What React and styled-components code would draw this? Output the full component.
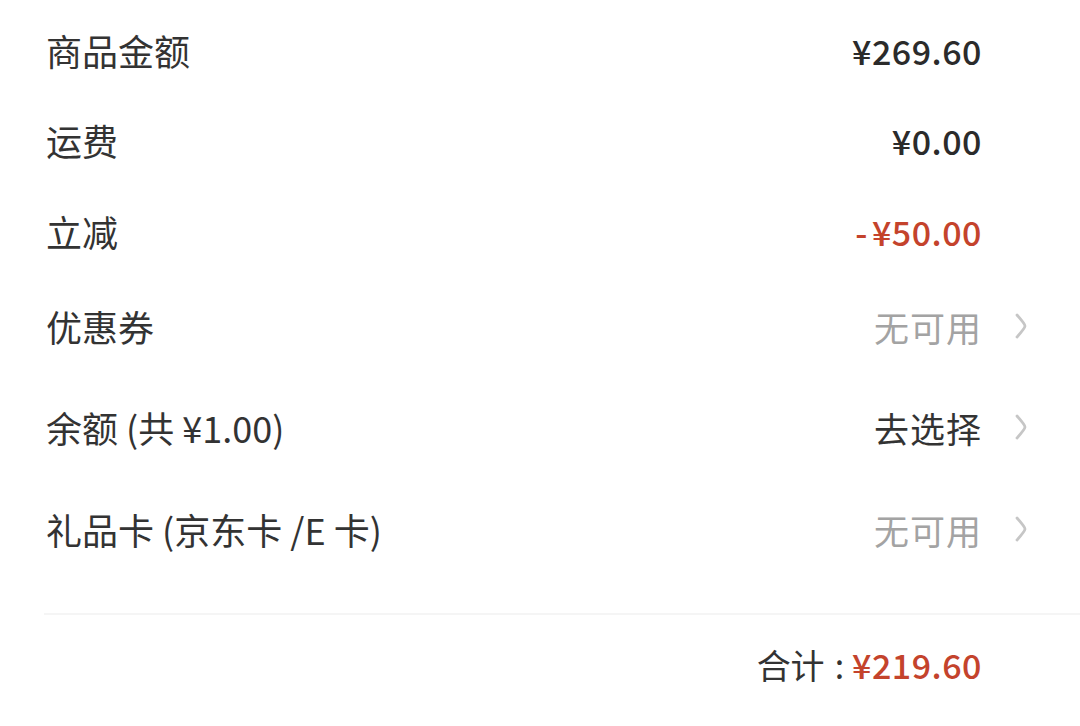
import React from "react";
import styled, { createGlobalStyle } from "styled-components";

const GlobalStyle = createGlobalStyle`
  html, body {
    margin: 0;
    padding: 0;
    background: #fff;
  }
  body {
    font-family: "Noto Sans CJK SC", "Noto Sans", sans-serif;
  }
`;

const Page = styled.div`
  width: 1080px;
  height: 726px;
  background: #fff;
  overflow: hidden;
  padding-top: 5px;
  box-sizing: border-box;
`;

const List = styled.div`
  display: flex;
  flex-direction: column;
  padding-left: 46px;
`;

const Row = styled.div`
  display: flex;
  align-items: center;
  justify-content: space-between;
  height: ${(p) => p.h}px;
  padding-right: ${(p) => (p.arrow ? 52 : 98)}px;
`;

const Label = styled.span`
  font-size: 36px;
  color: #333;
`;

const Amount = styled.span`
  font-size: 34px;
  font-weight: 500;
  color: ${(p) => (p.red ? "#c4432c" : "#2b2b2b")};
  letter-spacing: 0.5px;
`;

const Minus = styled.span`
  margin-right: 4px;
`;

const Action = styled.span`
  display: flex;
  align-items: center;
  gap: 32px;
  font-size: 35px;
  color: ${(p) => (p.muted ? "#a3a3a3" : "#333")};
  letter-spacing: 1px;
`;

const Chevron = () => (
  <svg width="14" height="26" viewBox="0 0 14 26" fill="none">
    <path
      d="M3 2 Q11 11 11 13 Q11 15 3 24"
      stroke="#c6c6c6"
      strokeWidth="2.8"
      strokeLinecap="round"
      fill="none"
    />
  </svg>
);

const Divider = styled.div`
  margin-top: 34px;
  margin-left: 44px;
  height: 2px;
  background: #f5f5f5;
`;

const Total = styled.div`
  display: flex;
  justify-content: flex-end;
  align-items: center;
  height: 98px;
  padding-right: 98px;
  font-size: 34px;
`;

const TotalLabel = styled.span`
  color: #333;
`;

const Colon = styled.span`
  color: #333;
  margin: 0 8px 0 10px;
`;

const TotalValue = styled.span`
  color: #c4432c;
  font-weight: 500;
  font-size: 34px;
  letter-spacing: 0.5px;
`;

export default function App() {
  return (
    <Page>
      <GlobalStyle />
      <List>
        <Row h={90}>
          <Label>商品金额</Label>
          <Amount>¥269.60</Amount>
        </Row>
        <Row h={90}>
          <Label>运费</Label>
          <Amount>¥0.00</Amount>
        </Row>
        <Row h={92}>
          <Label>立减</Label>
          <Amount red>
            <Minus>-</Minus>¥50.00
          </Amount>
        </Row>
        <Row h={98} arrow>
          <Label>优惠券</Label>
          <Action muted>
            无可用
            <Chevron />
          </Action>
        </Row>
        <Row h={104} arrow>
          <Label>余额 (共 ¥1.00)</Label>
          <Action>
            去选择
            <Chevron />
          </Action>
        </Row>
        <Row h={100} arrow>
          <Label>礼品卡 (京东卡 /E 卡)</Label>
          <Action muted>
            无可用
            <Chevron />
          </Action>
        </Row>
      </List>
      <Divider />
      <Total>
        <TotalLabel>合计</TotalLabel>
        <Colon>:</Colon>
        <TotalValue>¥219.60</TotalValue>
      </Total>
    </Page>
  );
}
